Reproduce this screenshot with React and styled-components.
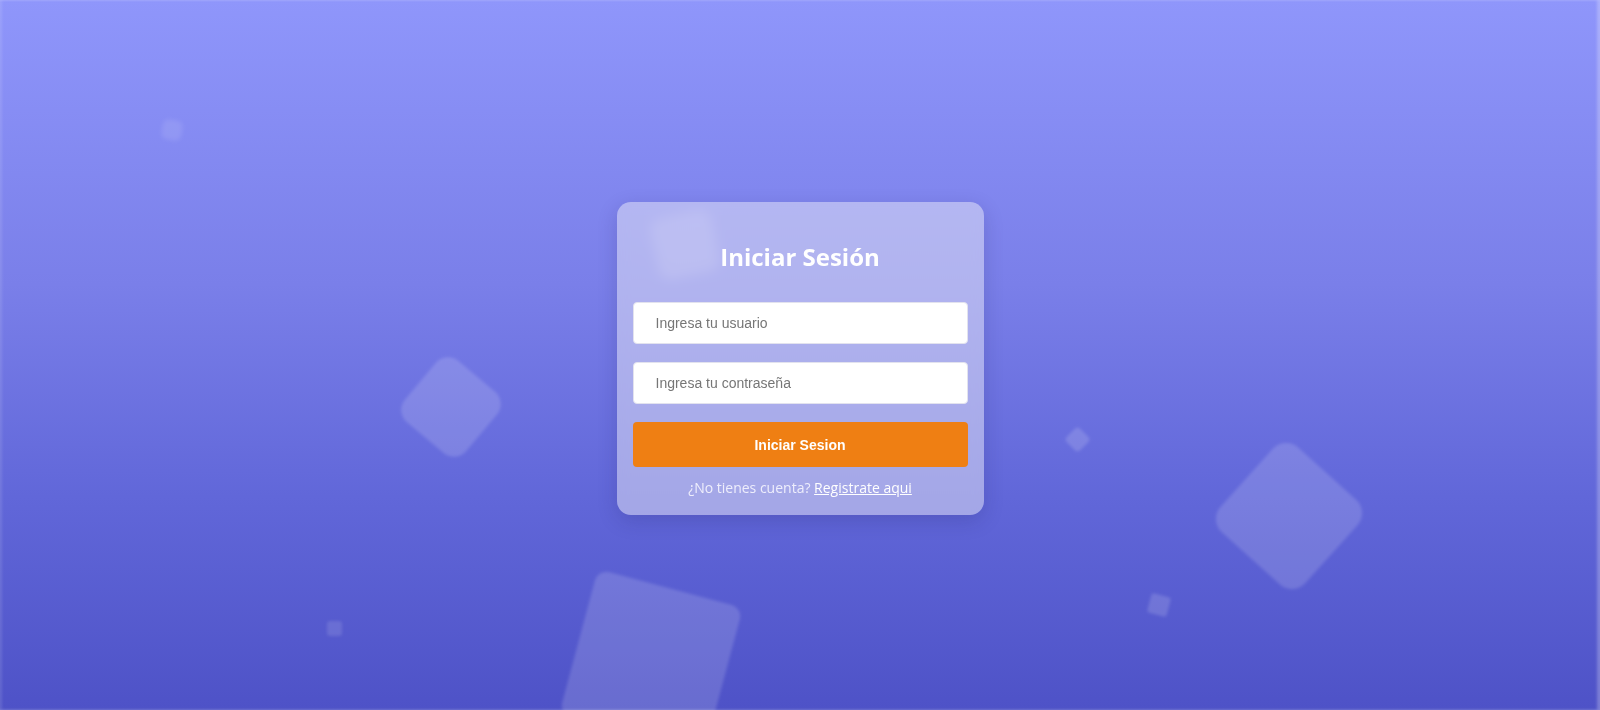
import React from "react";
import styled, { createGlobalStyle } from "styled-components";

const GlobalStyle = createGlobalStyle`
  html, body {
    margin: 0;
    padding: 0;
    height: 100%;
  }
  #root {
    height: 100%;
  }
`;

const Page = styled.div`
  position: relative;
  height: 710px;
  box-sizing: border-box;
  padding-top: 7px;
  overflow: hidden;
  display: flex;
  align-items: center;
  justify-content: center;
  background: linear-gradient(180deg, #8f96fb 0%, #7a7fe9 40%, #6167d9 70%, #4e52c7 100%);
  box-shadow: inset -3px 0 3px rgba(255, 255, 255, 0.25), inset 2px 0 3px rgba(255, 255, 255, 0.12);
  font-family: "Noto Sans", "Open Sans", sans-serif;
`;

const Shape = styled.div`
  position: absolute;
  left: ${(p) => p.x - p.size / 2}px;
  top: ${(p) => p.y - p.size / 2}px;
  width: ${(p) => p.size}px;
  height: ${(p) => p.size}px;
  border-radius: ${(p) => p.radius}px;
  background: rgba(255, 255, 255, ${(p) => p.alpha || 0.15});
  transform: rotate(${(p) => p.rot}deg);
  filter: blur(${(p) => p.blur || 1.5}px);
`;

const Card = styled.div`
  position: relative;
  z-index: 1;
  width: 367px;
  box-sizing: border-box;
  padding: 38px 16px 16px;
  border-radius: 14px;
  background: rgba(232, 232, 245, 0.5);
  backdrop-filter: blur(6px);
  box-shadow: 0 6px 20px rgba(30, 30, 90, 0.18);
  display: flex;
  flex-direction: column;
  align-items: stretch;
`;

const Title = styled.h2`
  margin: 0 0 28px;
  text-align: center;
  color: #ffffff;
  font-family: "Open Sans", "Noto Sans", sans-serif;
  font-weight: 700;
  font-size: 24px;
  line-height: 34px;
`;

const Form = styled.form`
  display: flex;
  flex-direction: column;
  gap: 18px;
`;

const Input = styled.input`
  height: 42px;
  box-sizing: border-box;
  padding: 0 22px;
  border: 1px solid #e2e2ee;
  border-radius: 4px;
  background: #ffffff;
  font-family: "Liberation Sans", Arial, sans-serif;
  font-size: 14px;
  color: #333;
  outline: none;

  &::placeholder {
    color: #767676;
  }
`;

const Submit = styled.button`
  height: 45px;
  border: none;
  border-radius: 4px;
  background: #ef7f13;
  color: #ffffff;
  font-family: "Liberation Sans", Arial, sans-serif;
  font-weight: 700;
  font-size: 14px;
  cursor: pointer;
`;

const Footer = styled.p`
  margin: 10px 0 0;
  text-align: center;
  color: #eeeefc;
  font-family: "Open Sans", "Noto Sans", sans-serif;
  font-size: 14px;
  line-height: 22px;
`;

const Link = styled.a`
  color: #ffffff;
  text-decoration: underline;
`;

const shapes = [
  { x: 172, y: 130, size: 20, radius: 6, rot: 10, alpha: 0.1, blur: 2 },
  { x: 685, y: 245, size: 62, radius: 12, rot: -12, alpha: 0.15 },
  { x: 451, y: 407, size: 80, radius: 16, rot: 40, alpha: 0.15 },
  { x: 651, y: 661, size: 150, radius: 12, rot: 15, alpha: 0.15 },
  { x: 1077, y: 439, size: 19, radius: 4, rot: 45, alpha: 0.15 },
  { x: 1289, y: 516, size: 114, radius: 18, rot: 42, alpha: 0.15 },
  { x: 1159, y: 605, size: 20, radius: 3, rot: 15, alpha: 0.15 },
  { x: 334, y: 628, size: 15, radius: 3, rot: 0, alpha: 0.12 },
];

export default function App() {
  return (
    <>
      <GlobalStyle />
      <Page>
        {shapes.map((s, i) => (
          <Shape key={i} {...s} />
        ))}
        <Card>
          <Title>Iniciar Sesión</Title>
          <Form onSubmit={(e) => e.preventDefault()}>
            <Input type="text" placeholder="Ingresa tu usuario" />
            <Input type="password" placeholder="Ingresa tu contraseña" />
            <Submit type="submit">Iniciar Sesion</Submit>
          </Form>
          <Footer>
            ¿No tienes cuenta? <Link href="#">Registrate aqui</Link>
          </Footer>
        </Card>
      </Page>
    </>
  );
}
